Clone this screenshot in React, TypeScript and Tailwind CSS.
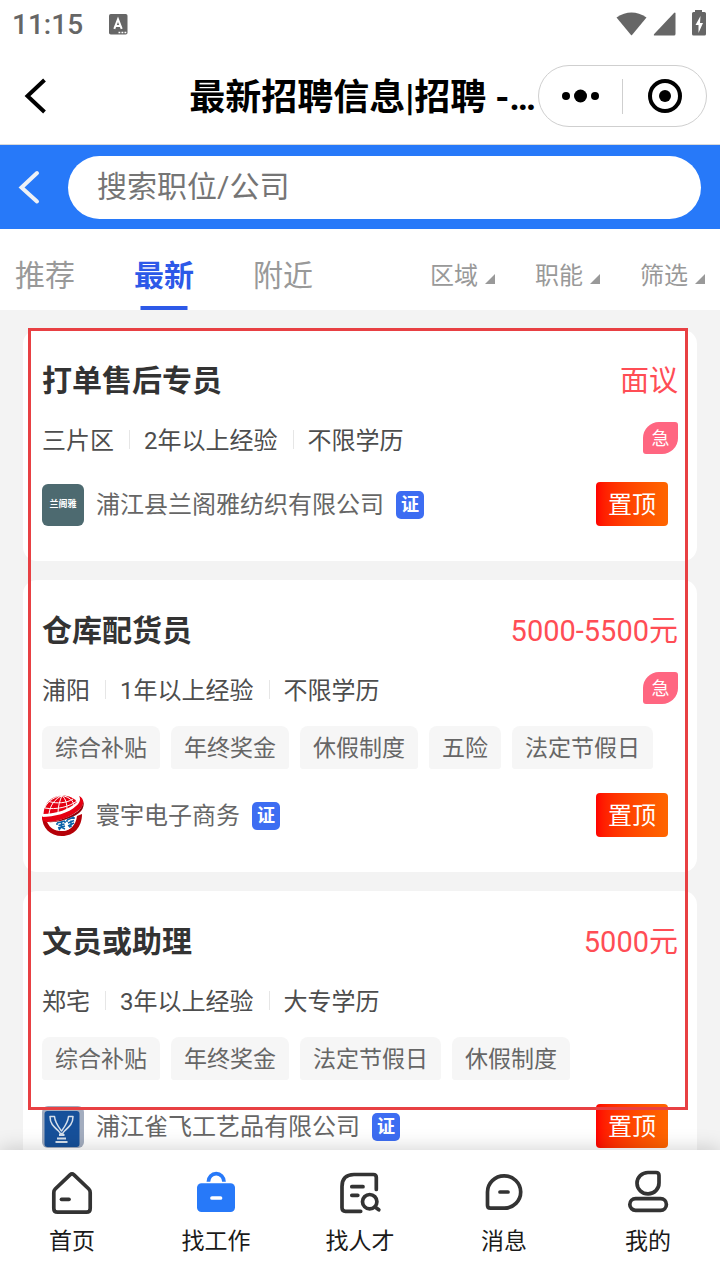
import { useState } from 'react'
import type { ReactNode } from 'react'

type Job = {
  id: number
  title: string
  salary: string
  meta: string[]
  urgent?: boolean
  tags: string[]
  company: string
  logo: ReactNode
}

function TealLogo() {
  return (
    <span className="flex size-[42px] items-center justify-center rounded-md bg-[#4d6a70] font-['Liberation_Serif','Noto_Sans_CJK_SC',serif] text-[9px] font-bold text-white">
      兰阁雅
    </span>
  )
}

function GlobeLogo() {
  return (
    <svg viewBox="0 0 42 42" className="size-[42px]" aria-hidden="true">
      <circle cx="20" cy="21" r="19.5" fill="#fff" />
      <path d="M1.500 19C2 8 10 .8 20 .6c7 0 12 2.600 15 6.400C28 14 14 19 1.500 19Z" fill="#e50012" />
      <g fill="none" stroke="#fff" strokeWidth="1">
        <path d="M7 6.500C15 9 25 8 31 4M3 13C14 15 27 12 35 6" />
        <path d="M20 .6C13 4 8 10 7 19M20 .6C18 5 16 11 16 18M20 .6C24 4 25 9 25 15M20 .6C28 2 31 6 32 10M20 .6C10 2 5 8 2.500 13" />
      </g>
      <path d="M0 21c0 12 8 20 20 20 12 0 20-9 20-22l-5 2c-1 9-7 15-15 15S8 33 5 27Z" fill="#b50008" />
      <path d="M37 1c5 2 6 8 1 13-7 7-22 13-33 13-4 0-5.500-3-5-5 12 0 27-4 34-11 4-3 5-7 3-10Z" fill="#e50012" />
      <path d="M41.500 6c0 4-3 8-6 10.500C28 22 15 27 5 27c10 1 24-3 32-9 4-3 5.500-8 4.500-12Z" fill="#8e0008" />
      <path d="M9 29c9 0 19-4 25-8-1 9-6 15-14 15-5 0-9-3-11-7Z" fill="#fff" />
      <g fill="none" stroke="#0a62a8" strokeWidth="1.500">
        <path d="m15 28 8-2M15 28v2M23 26v2M16.500 30.500l6-1.500M16 33l7-2M17 35l2-3 4 2M19.500 26.500v5" />
        <path d="m25 25 7-3M25 25v2M32 22v2M26 28l6-2.500M26 31l6-3M29 25.500v6l-2 .5" />
      </g>
    </svg>
  )
}

function TrophyLogo() {
  return (
    <svg viewBox="0 0 42 42" className="size-[42px]" aria-hidden="true">
      <rect width="42" height="42" rx="6" fill="#a3adbf" />
      <rect x="2.500" y="5" width="35" height="36" rx="3" fill="#16509a" />
      <g fill="none" stroke="#d5dfeb" strokeWidth="1.500" strokeLinejoin="round">
        <path d="M8 10.500h4.500c.5 6 3 9 7 14.500 4-5.500 6.500-8.500 7-14.500H31c0 7-3.500 10-8 14-1.500 1.500-2 2-2.200 3h-2.600c-.2-1-.7-1.500-2.200-3-4.500-4-8-7-8-14Z" />
        <path d="M17 29h5.500M15 32.500h9M13.500 36h12" strokeWidth="1.800" />
      </g>
    </svg>
  )
}

const jobs: Job[] = [
  {
    id: 1,
    title: '打单售后专员',
    salary: '面议',
    meta: ['三片区', '2年以上经验', '不限学历'],
    urgent: true,
    tags: [],
    company: '浦江县兰阁雅纺织有限公司',
    logo: <TealLogo />,
  },
  {
    id: 2,
    title: '仓库配货员',
    salary: '5000-5500元',
    meta: ['浦阳', '1年以上经验', '不限学历'],
    urgent: true,
    tags: ['综合补贴', '年终奖金', '休假制度', '五险', '法定节假日'],
    company: '寰宇电子商务',
    logo: <GlobeLogo />,
  },
  {
    id: 3,
    title: '文员或助理',
    salary: '5000元',
    meta: ['郑宅', '3年以上经验', '大专学历'],
    tags: ['综合补贴', '年终奖金', '法定节假日', '休假制度'],
    company: '浦江雀飞工艺品有限公司',
    logo: <TrophyLogo />,
  },
]

const navItems = [
  {
    label: '首页',
    icon: (
      <>
        <path d="M22 6.800q2-1.800 4 0L40.800 21q1.400 1.400 1.400 3.400v16q0 3.800-3.800 3.800H9.600q-3.800 0-3.800-3.800v-16q0-2 1.400-3.400Z" />
        <path d="M13.500 31.300H21" />
      </>
    ),
  },
  {
    label: '找工作',
    icon: (
      <>
        <rect x="5" y="15.300" width="38" height="28.700" rx="4.500" fill="#2779f9" stroke="none" />
        <path d="M16.400 13.800a7.800 8.200 0 0 1 15.600 0" stroke="#2779f9" strokeLinecap="butt" />
        <path d="M20 30h8.500" stroke="#fff" />
      </>
    ),
  },
  {
    label: '找人才',
    icon: (
      <>
        <path d="M40.300 21.500V9.500q0-3-3-3H18q-12 0-12 12v21.300q0 3.500 3.500 3.500h15.200" />
        <path d="M15.800 18.700H27M15.800 27.300h6M39 39l3.800 2.800" />
        <circle cx="33.700" cy="33.700" r="7.200" />
      </>
    ),
  },
  {
    label: '消息',
    icon: (
      <>
        <path d="M7.500 24a16.600 16.200 0 1 1 16.800 16.200H10.500q-3 0-3-3Z" />
        <path d="M20 24h8" />
      </>
    ),
  },
  {
    label: '我的',
    icon: (
      <>
        <path d="M24 4.500h8q3 0 3 3V15a11 10.700 0 1 1-11-10.500Z" />
        <rect x="5.800" y="30.700" width="36.600" height="11.600" rx="5.800" />
      </>
    ),
  },
]

function StatusBar() {
  return (
    <div className="flex h-12 items-center px-3 text-[#666]">
      <span className="pt-0.5 text-[28px] font-medium leading-8">11:15</span>
      <svg viewBox="0 0 20 21" className="ml-[26px] h-[21px] w-5" aria-hidden="true">
        <rect width="18.500" height="20.500" rx="1.800" fill="currentColor" />
        <path d="m5.300 14.800 3.700-9.600 3.700 9.600M6.500 12h5" fill="none" stroke="#fff" strokeWidth="2" />
        <path d="M9.500 18.500h1.800m1.200 0h1.800m1.200 0h1.800" stroke="#fff" strokeWidth="1.600" />
      </svg>
      <svg viewBox="0 1 92 28" className="ml-auto h-7 w-[92px]" aria-hidden="true">
        <path d="M.5 8.500Q15.500-1.500 30.500 8.500L16 26Q15.500 26.500 15 26Z" fill="currentColor" />
        <path d="M59.500 4v21q0 1.500-1.500 1.500H39q-2 0-.8-1.500L58 4q1-.8 1.500 0Z" fill="currentColor" />
        <path d="M79 1h7v2h2.500Q90 3 90 4.500V25q0 1.500-1.500 1.500h-11Q76 26.500 76 25V4.500Q76 3 77.500 3H79Z" fill="currentColor" />
        <path d="m84.500 7-5 9h3v8l4.500-10h-3Z" fill="#fff" />
      </svg>
    </div>
  )
}

function TitleBar() {
  return (
    <header className="flex h-[97px] items-center border-b border-[#d9d9d9] pl-6 pr-[13px] text-black">
      <button type="button" aria-label="返回">
        <svg viewBox="0 0 22 36" className="h-9 w-[22px]" fill="none" stroke="currentColor" strokeWidth="4">
          <path d="M20.500 2 3.500 18l17 16" />
        </svg>
      </button>
      <h1 className="ml-auto mr-0.5 whitespace-nowrap pt-1 text-[36px] font-bold leading-[48px]">
        最新招聘信息|招聘 -…
      </h1>
      <div className="flex h-[62px] w-[169px] items-center rounded-full border border-[#cfcfcf]">
        <button type="button" aria-label="更多" className="flex flex-1 justify-center">
          <svg viewBox="0 0 38 14" className="h-3.5 w-[38px]" fill="currentColor">
            <circle cx="4" cy="7" r="4" />
            <circle cx="18.500" cy="7" r="6.500" />
            <circle cx="33" cy="7" r="4" />
          </svg>
        </button>
        <span className="h-[35px] w-px bg-[#cfcfcf]" />
        <button type="button" aria-label="关闭" className="flex flex-1 justify-center">
          <svg viewBox="0 0 34 34" className="size-[34px]">
            <circle cx="17" cy="17" r="15" fill="none" stroke="currentColor" strokeWidth="4" />
            <circle cx="17" cy="17" r="6" fill="currentColor" />
          </svg>
        </button>
      </div>
    </header>
  )
}

function SearchBar() {
  const [keyword, setKeyword] = useState('')

  return (
    <form className="flex h-[84px] items-center bg-[#2779f9] pl-[18px] pr-[19px]" onSubmit={(e) => e.preventDefault()}>
      <button type="button" aria-label="返回上一页" className="mr-7">
        <svg viewBox="0 0 22 36" className="h-9 w-[22px]" fill="none" stroke="#eef1f6" strokeWidth="4" strokeLinecap="round">
          <path d="M19 4 3.500 18.500 19 32.500" />
        </svg>
      </button>
      <input
        type="search"
        aria-label="搜索职位/公司"
        placeholder="搜索职位/公司"
        value={keyword}
        onChange={(e) => setKeyword(e.target.value)}
        className="h-[63px] min-w-0 flex-1 rounded-full bg-white px-[29px] pb-0.5 text-[30px] text-[#333] outline-none placeholder:text-[#757575]"
      />
    </form>
  )
}

function Tabs() {
  const [active, setActive] = useState('最新')

  return (
    <div className="flex h-[81px] justify-between bg-white px-[15px]">
      <div className="flex gap-[59px]">
        {['推荐', '最新', '附近'].map((tab) => (
          <button
            key={tab}
            type="button"
            onClick={() => setActive(tab)}
            className={
              tab === active
                ? 'relative pb-2 pt-5 text-[30px] font-bold leading-10 text-[#2d59e8] after:absolute after:bottom-0 after:left-1/2 after:h-1 after:w-[47px] after:-translate-x-1/2 after:bg-[#2d59e8]'
                : 'pb-2 pt-5 text-[30px] leading-10 text-[#999]'
            }
          >
            {tab}
          </button>
        ))}
      </div>
      <div className="flex gap-10">
        {['区域', '职能', '筛选'].map((name) => (
          <button key={name} type="button" aria-haspopup="true" className="flex items-center gap-[7px] pt-3 text-2xl text-[#999]">
            {name}
            <svg viewBox="0 0 10 10" className="mt-1.5 size-2.5" fill="currentColor" aria-hidden="true">
              <path d="M10 0v10H0Z" />
            </svg>
          </button>
        ))}
      </div>
    </div>
  )
}

function JobCard({ job }: { job: Job }) {
  return (
    <li className="rounded-[14px] bg-white px-[19px] pb-[35px] pt-7">
      <div className="flex h-11 items-center justify-between pt-0.5">
        <h2 className="text-[30px] font-bold leading-[42px] text-[#333]">{job.title}</h2>
        <span className="text-[29px] leading-[42px] text-[#ff4d55]">{job.salary}</span>
      </div>

      <div className="mt-5 flex h-9 justify-between">
        <p className="flex items-center pt-0.5 text-2xl text-[#4d4d4d]">
          {job.meta.map((item, i) => (
            <span key={item} className="flex items-center">
              {i > 0 && <span className="-mt-1 ml-[15px] mr-3.5 h-[19px] w-px bg-[#e6e6e6]" />}
              {item}
            </span>
          ))}
        </p>
        {job.urgent && (
          <span className="flex h-8 w-[35px] items-center justify-center rounded-bl-[3px] rounded-br-[16px] rounded-tl-[16px] rounded-tr-[3px] bg-[#ff6681] pt-0.5 text-lg text-white">
            急
          </span>
        )}
      </div>

      {job.tags.length > 0 && (
        <ul className="mt-[18px] flex gap-[11px]">
          {job.tags.map((tag) => (
            <li key={tag} className="h-[43px] whitespace-nowrap rounded-b-[3px] rounded-t-lg bg-[#f6f6f6] px-[13px] text-[23px] leading-[45px] text-[#666]">
              {tag}
            </li>
          ))}
        </ul>
      )}

      <div className="mt-6 flex h-11 items-center justify-between">
        <div className="flex items-center pt-0.5">
          {job.logo}
          <span className="ml-3 text-2xl text-[#666]">{job.company}</span>
          <span className="ml-3 flex size-7 items-center justify-center rounded-[5px] bg-[#3d6df2] text-lg font-bold text-white">
            证
          </span>
        </div>
        <button type="button" className="mr-2.5 h-11 w-[72px] rounded bg-linear-to-r from-[#ff0000] to-[#ff6600] pt-0.5 text-2xl text-white">
          置顶
        </button>
      </div>
    </li>
  )
}

function BottomNav() {
  return (
    <nav className="relative flex bg-white pb-[22px] pt-[18px] shadow-[0_0_20px_rgba(0,0,0,0.2)]">
      {navItems.map((item) => (
        <a key={item.label} href="#" className="flex flex-1 flex-col items-center gap-2.5 text-[23px] leading-8 text-[#1a1a1a]">
          <svg viewBox="0 0 48 48" className="size-12" fill="none" stroke="#333" strokeWidth="3.700" strokeLinecap="round" strokeLinejoin="round" aria-hidden="true">
            {item.icon}
          </svg>
          {item.label}
        </a>
      ))}
    </nav>
  )
}

export default function App() {
  return (
    <div lang="zh-CN" className="flex h-screen flex-col overflow-hidden bg-white font-[Roboto,'Noto_Sans_CJK_SC',sans-serif]">
      <StatusBar />
      <TitleBar />
      <SearchBar />
      <Tabs />
      <main className="relative min-h-0 flex-1 bg-[#f3f3f3]">
        <ul className="flex h-full flex-col gap-[19px] overflow-y-auto px-[23px] pt-5 [scrollbar-width:none]">
          {jobs.map((job) => (
            <JobCard key={job.id} job={job} />
          ))}
        </ul>
        {/* highlight frame over the list */}
        <div className="pointer-events-none absolute bottom-10 left-7 right-8 top-[18px] border-[3px] border-[#e84043]" />
      </main>
      <BottomNav />
    </div>
  )
}
